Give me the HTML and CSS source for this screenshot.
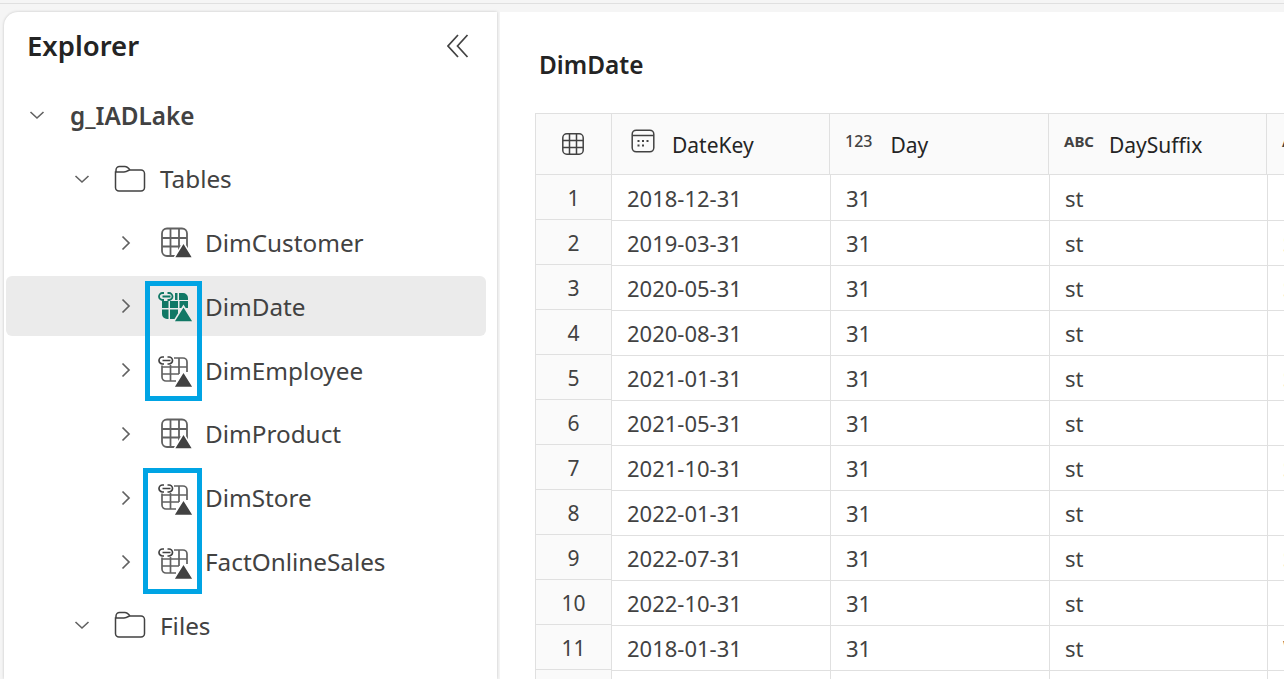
FILE: index.html
```html
<!DOCTYPE html>
<html lang="en">
<head>
  <meta charset="UTF-8" />
  <title>DimDate</title>
  <link rel="stylesheet" href="styles.css">
</head>
<body>
  <svg class="defs" width="0" height="0">
    <defs>
      <symbol id="chev-right" viewBox="0 0 16 16"><path d="M3.500 1.500 10 8 3.500 14.500" fill="none" stroke="#616161" stroke-width="1.700"/></symbol>
      <symbol id="chev-down" viewBox="0 0 16 16"><path d="M1.500 5 8 11 14.500 5" fill="none" stroke="#616161" stroke-width="1.600"/></symbol>
      <symbol id="folder" viewBox="0 0 32 28"><path d="M2 7V5a3.500 3.500 0 0 1 3.500-3.500h5.500c1.500 0 2.500 .7 3.500 1.800l1.500 1.700H27a3.500 3.500 0 0 1 3.500 3.500v14a3.500 3.500 0 0 1-3.500 3.500H5a3.500 3.500 0 0 1-3.500-3.500V7H10c1.500 0 3-.7 5.500-2" fill="none" stroke="#424242" stroke-width="1.500"/></symbol>
      <symbol id="tbl" viewBox="0 0 36 36">
        <rect x="4" y="3.500" width="25" height="27.500" rx="5" fill="none" stroke="#616161" stroke-width="1.800"/>
        <path d="M12.500 4v27M21 4v27M4 13h25M4 21.500h25" stroke="#616161" stroke-width="1.800"/>
        <path d="M25.500 17.500 35 33H16Z" fill="#424242" stroke="#fff" stroke-width="1.500"/>
      </symbol>
      <symbol id="tbl-link" viewBox="0 0 36 36">
        <path d="M16 6h9a4 4 0 0 1 4 4v10M4 13.500V25a4 4 0 0 0 4 4h10M4 15h25M4 22h17M12.500 13v16M21 6v16" fill="none" stroke="#616161" stroke-width="1.700"/>
        <path d="M6 5H4.500a3.500 3.500 0 0 0 0 7H6M9.500 5H11a3.500 3.500 0 0 1 0 7H9.500M4.500 8.500h8" fill="none" stroke="#424242" stroke-width="1.700"/>
        <path d="M25.500 19.500 35.500 35.500H15.500Z" fill="#424242" stroke="#fff" stroke-width="1.500"/>
      </symbol>
      <symbol id="tbl-link-on" viewBox="0 0 36 36">
        <path d="M17 5h2.500v7H17zM21 5h4a5 5 0 0 1 5 5v2h-9zM4 13h6.500v7H4zM12 13h8v7h-8zM21.500 13H30v7h-8.500zM4 21.500h6.500V31H9a5 5 0 0 1-5-5zM12 21.500h8V31h-8z" fill="#117865"/>
        <path d="M6 5H4.500a3.500 3.500 0 0 0 0 7H6M9.500 5H11a3.500 3.500 0 0 1 0 7H9.500M4.500 8.500h8" fill="none" stroke="#117865" stroke-width="1.800"/>
        <path d="M25.500 18 35.500 34H15.500Z" fill="#117865" stroke="#ebebeb" stroke-width="1.500"/>
      </symbol>
    </defs>
  </svg>

  <div class="topline"></div>
  <div class="app">
    <aside class="explorer">
      <div class="explorer-head">
        <h2>Explorer</h2>
        <svg class="collapse" viewBox="0 0 22 24" width="22" height="24"><path d="M11 1 1 12 11 23M20.500 1 10.500 12 20.500 23" fill="none" stroke="#424242" stroke-width="1.700"/></svg>
      </div>
      <ul class="tree">
        <li class="node lvl0 strong"><svg class="chev"><use href="#chev-down"/></svg><span>g_IADLake</span></li>
        <li class="node lvl1"><svg class="chev"><use href="#chev-down"/></svg><svg class="ico-folder"><use href="#folder"/></svg><span>Tables</span></li>
        <li class="node lvl2"><svg class="chev"><use href="#chev-right"/></svg><svg class="ico"><use href="#tbl"/></svg><span>DimCustomer</span></li>
        <li class="node lvl2 selected"><svg class="chev"><use href="#chev-right"/></svg><svg class="ico"><use href="#tbl-link-on"/></svg><span>DimDate</span></li>
        <li class="node lvl2"><svg class="chev"><use href="#chev-right"/></svg><svg class="ico"><use href="#tbl-link"/></svg><span>DimEmployee</span></li>
        <li class="node lvl2"><svg class="chev"><use href="#chev-right"/></svg><svg class="ico"><use href="#tbl"/></svg><span>DimProduct</span></li>
        <li class="node lvl2"><svg class="chev"><use href="#chev-right"/></svg><svg class="ico"><use href="#tbl-link"/></svg><span>DimStore</span></li>
        <li class="node lvl2"><svg class="chev"><use href="#chev-right"/></svg><svg class="ico"><use href="#tbl-link"/></svg><span>FactOnlineSales</span></li>
        <li class="node lvl1"><svg class="chev"><use href="#chev-down"/></svg><svg class="ico-folder"><use href="#folder"/></svg><span>Files</span></li>
      </ul>
      <div class="callout callout-a"></div>
      <div class="callout callout-b"></div>
    </aside>

    <main class="content">
      <h1>DimDate</h1>
      <div class="grid">
        <div class="row head">
          <div class="num">
            <svg viewBox="0 0 24 24" width="24" height="24"><rect x="1.800" y="1.800" width="20.400" height="20.400" rx="4" fill="none" stroke="#424242" stroke-width="1.500"/><path d="M8.500 2v20M15.500 2v20M2 8.500h20M2 15.500h20" stroke="#424242" stroke-width="1.500"/></svg>
          </div>
          <div class="th">
            <svg class="cal" viewBox="0 0 24 24" width="24" height="24"><rect x="1.200" y="1.200" width="21.600" height="21.600" rx="4" fill="none" stroke="#424242" stroke-width="1.500"/><path d="M1.500 6.500h21" stroke="#424242" stroke-width="1.500"/><path d="M6.500 11h2v2h-2zM11 11h2v2h-2zM15.500 11h2v2h-2zM6.500 15.500h2v2h-2zM11 15.500h2v2h-2z" fill="#424242"/></svg>
            <span>DateKey</span>
          </div>
          <div class="th"><b class="type t123">123</b><span>Day</span></div>
          <div class="th"><b class="type tabc">ABC</b><span>DaySuffix</span></div>
          <div class="th"><b class="type tabc">ABC</b><span>DayName</span></div>
        </div>
        <div class="row"><div class="num">1</div><div class="td">2018-12-31</div><div class="td">31</div><div class="td">st</div><div class="td">Monday</div></div>
        <div class="row"><div class="num">2</div><div class="td">2019-03-31</div><div class="td">31</div><div class="td">st</div><div class="td">Sunday</div></div>
        <div class="row"><div class="num">3</div><div class="td">2020-05-31</div><div class="td">31</div><div class="td">st</div><div class="td">Sunday</div></div>
        <div class="row"><div class="num">4</div><div class="td">2020-08-31</div><div class="td">31</div><div class="td">st</div><div class="td">Monday</div></div>
        <div class="row"><div class="num">5</div><div class="td">2021-01-31</div><div class="td">31</div><div class="td">st</div><div class="td">Sunday</div></div>
        <div class="row"><div class="num">6</div><div class="td">2021-05-31</div><div class="td">31</div><div class="td">st</div><div class="td">Monday</div></div>
        <div class="row"><div class="num">7</div><div class="td">2021-10-31</div><div class="td">31</div><div class="td">st</div><div class="td">Sunday</div></div>
        <div class="row"><div class="num">8</div><div class="td">2022-01-31</div><div class="td">31</div><div class="td">st</div><div class="td">Monday</div></div>
        <div class="row"><div class="num">9</div><div class="td">2022-07-31</div><div class="td">31</div><div class="td">st</div><div class="td">Sunday</div></div>
        <div class="row"><div class="num">10</div><div class="td">2022-10-31</div><div class="td">31</div><div class="td">st</div><div class="td">Monday</div></div>
        <div class="row"><div class="num">11</div><div class="td">2018-01-31</div><div class="td">31</div><div class="td">st</div><div class="td">Wednesday</div></div>
        <div class="row"><div class="num"></div><div class="td"></div><div class="td"></div><div class="td"></div><div class="td"></div></div>
      </div>
    </main>
  </div>
</body>
</html>
```

FILE: styles.css
```css
* {
  box-sizing: border-box;
}
html, body {
  height: 100%;
}
body {
  margin: 0;
  overflow: hidden;
  background: #f5f5f5;
  color: #424242;
  font-family: "Noto Sans", "Open Sans", Arial, sans-serif;
  font-size: 21px;
}
.defs {
  position: absolute;
}
.topline {
  height: 4px;
  border-bottom: 1px solid #e0e0e0;
}
.app {
  display: flex;
  height: 675px;
  padding: 8px 0 0 4px;
}

/* left tree */
.explorer {
  position: relative;
  width: 493px;
  flex: none;
  background: #fff;
  border-radius: 14px 0 0 0;
  box-shadow: 0 0 3px rgba(0, 0, 0, .2);
}
.explorer-head {
  display: flex;
  justify-content: space-between;
  align-items: center;
  height: 60px;
  padding: 7px 28px 0 23px;
}
.explorer-head h2 {
  margin: 0;
  font-size: 27.500px;
  font-weight: 600;
  color: #242424;
}
.tree {
  list-style: none;
  margin: 13px 0 0 2px;
  padding: 0;
  width: 480px;
  display: flex;
  flex-direction: column;
  gap: 3.800px;
  font-size: 24.300px;
}
.node {
  display: flex;
  align-items: center;
  height: 60px;
  border-radius: 6px;
}
.node.strong {
  font-weight: 600;
}
.node.selected {
  background: #ebebeb;
}
.chev {
  width: 16px;
  height: 16px;
  flex: none;
}
.lvl0 {
  padding-left: 23px;
}
.lvl0 .chev {
  margin-right: 25px;
}
.lvl1 {
  padding-left: 68px;
}
.lvl1 .chev {
  margin-right: 24px;
}
.lvl2 {
  padding-left: 113px;
}
.lvl2 .chev {
  margin-right: 23px;
}
.ico-folder {
  width: 32px;
  height: 28px;
  margin-right: 14px;
  flex: none;
}
.ico {
  width: 36px;
  height: 36px;
  margin-right: 11px;
  flex: none;
}
.callout {
  position: absolute;
  border: 5px solid #00a4e4;
}
.callout-a {
  left: 141px;
  top: 269px;
  width: 57px;
  height: 120px;
}
.callout-b {
  left: 139px;
  top: 456px;
  width: 59px;
  height: 126px;
}

/* data preview */
.content {
  flex: 1;
  min-width: 0;
  margin-left: 3px;
  padding: 0 0 0 35px;
  background: #fff;
  overflow: hidden;
}
.content h1 {
  margin: 0;
  height: 101px;
  padding: 36px 0 0 4px;
  font-size: 24.400px;
  font-weight: 600;
  color: #242424;
}
.grid {
  width: 1000px;
  border-top: 1px solid #e0e0e0;
  border-left: 1px solid #e0e0e0;
}
.row {
  display: grid;
  grid-template-columns: 76px 219px 219px 218px 1fr;
  height: 45px;
}
.row.head {
  height: 61px;
  grid-template-columns: 76px 218px 219px 218px 1fr;
  background: #fafafa;
}
.num {
  display: flex;
  align-items: center;
  justify-content: center;
  height: 45px;
  padding-top: 2px;
  background: #fafafa;
  border-right: 1px solid #e0e0e0;
  border-bottom: 1px solid #e0e0e0;
}
.head .num {
  height: 61px;
  padding: 0 2px 0 0;
}
.td {
  height: 46px;
  display: flex;
  align-items: center;
  padding-left: 15px;
  padding-top: 1px;
  font-size: 22px;
  border-right: 1px solid #e0e0e0;
  border-bottom: 1px solid #e0e0e0;
  white-space: nowrap;
}
.th {
  display: flex;
  align-items: center;
  height: 61px;
  padding: 2px 0 0 15px;
  color: #242424;
  border-right: 1px solid #e0e0e0;
  border-bottom: 1px solid #e0e0e0;
  white-space: nowrap;
}
.cal {
  margin: -8px 17px 0 4px;
}
.type {
  font-size: 15px;
  font-weight: 700;
  line-height: 1;
  color: #424242;
  margin-top: -8px;
  margin-right: 15px;
}
.t123 {
  font-size: 16px;
  font-weight: 500;
  margin-right: 18px;
}
```
